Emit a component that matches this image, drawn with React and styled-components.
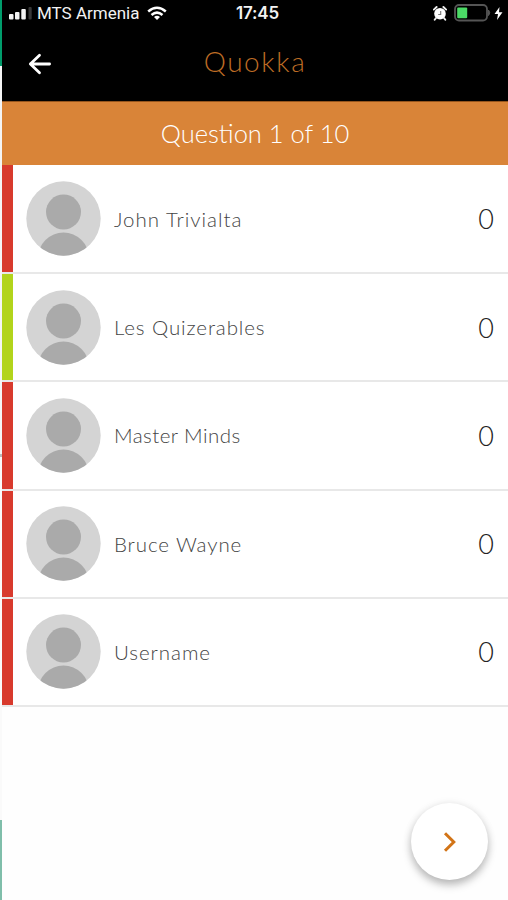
import React from "react";
import styled, { createGlobalStyle } from "styled-components";

const GlobalStyle = createGlobalStyle`
  * { box-sizing: border-box; }
  body { margin: 0; background: #fff; font-family: Lato, sans-serif; }
`;

const Page = styled.div`
  display: grid;
  grid-template-columns: 2px 1fr;
  height: 900px;
  overflow: hidden;
  background: #fefefe;
`;

const Edge = styled.div`
  display: grid;
  grid-template-rows: 66px 388px 3px 363px 80px;
`;

const EdgePart = styled.div`
  background: ${(p) => p.$color};
`;

const Screen = styled.main`
  display: flex;
  flex-direction: column;
  min-width: 0;
`;

const StatusBar = styled.div`
  display: grid;
  grid-template-columns: 1fr auto 1fr;
  align-items: center;
  height: 26px;
  padding: 0 5px 0 7px;
  background: #000;
  color: #f2f2f2;
  font-family: Roboto, sans-serif;
  font-size: 17px;
`;

const StatusGroup = styled.div`
  display: flex;
  align-items: center;
  justify-content: ${(p) => (p.$end ? "flex-end" : "flex-start")};
`;

const BatteryGroup = styled.div`
  display: flex;
  align-items: center;
  gap: 2px;
  margin-left: 7px;
`;

const Carrier = styled.span`
  margin: 0 8px 0 5px;
  white-space: nowrap;
`;

const Clock = styled.span`
  margin-left: 3px;
  font-family: Inter, sans-serif;
  font-size: 17px;
  font-weight: 600;
  letter-spacing: -0.15px;
`;

const Header = styled.header`
  display: grid;
  grid-template-columns: 50px 1fr 50px;
  align-items: center;
  height: 75px;
  background: #000;
`;

const BackButton = styled.button`
  display: flex;
  margin-left: 25px;
  padding: 0;
  border: 0;
  background: none;
`;

const Title = styled.h1`
  margin: -5px 0 0;
  color: #bd6c25;
  font-size: 28px;
  font-weight: 300;
  letter-spacing: 1.6px;
  line-height: 34px;
  text-align: center;
`;

const Banner = styled.div`
  display: flex;
  align-items: center;
  justify-content: center;
  height: 64px;
  padding-bottom: 1px;
  border-top: 1px solid #95551d;
  background: #d98438;
  color: #fff;
  font-size: 25.5px;
  font-weight: 300;
`;

const List = styled.ul`
  margin: 0;
  padding: 0;
  list-style: none;
`;

const Row = styled.li`
  display: flex;
  align-items: center;
  height: 108.25px;
  padding: 0 14px 0 13px;
  border-bottom: 2px solid #e8e8e8;
  background: linear-gradient(to right, ${(p) => p.$color} 11px, #fff 11px);

  &:first-child {
    height: 109px;
  }
`;

const Avatar = styled.svg`
  flex: none;
  width: 75px;
  height: 75px;
  margin-left: 11px;
`;

const Name = styled.span`
  flex: 1;
  margin-left: 13px;
  color: #444;
  font-size: 20.5px;
  font-weight: 300;
  letter-spacing: ${(p) => p.$spacing}px;
`;

const Score = styled.span`
  color: #222;
  font-size: 27px;
  font-weight: 300;
`;

const Footer = styled.footer`
  display: flex;
  flex: 1;
  align-items: flex-end;
  justify-content: flex-end;
  padding: 0 20px 20px 0;
`;

const NextButton = styled.button`
  display: flex;
  align-items: center;
  justify-content: center;
  width: 77px;
  height: 77px;
  padding: 0;
  border: 0;
  border-radius: 50%;
  background: #fff;
  box-shadow: 0 5px 8px rgba(0, 0, 0, 0.25), 0 1px 10px rgba(0, 0, 0, 0.08);
`;

const players = [
  { name: "John Trivialta", color: "#d83a2d", spacing: 1 },
  { name: "Les Quizerables", color: "#b2d41b", spacing: 0.9 },
  { name: "Master Minds", color: "#d83a2d", spacing: 0.45 },
  { name: "Bruce Wayne", color: "#d83a2d", spacing: 0.9 },
  { name: "Username", color: "#d83a2d", spacing: 0.95 },
];

function SignalIcon() {
  return (
    <svg width="23" height="13" viewBox="0 0 23 13" fill="#f4f4f4">
      <rect x="0" y="7" width="4.5" height="5.5" rx="1" />
      <rect x="6" y="5" width="4.5" height="7.5" rx="1" />
      <rect x="12.3" y="2" width="4.5" height="10.5" rx="1" />
      <rect x="19.5" y="0" width="3.2" height="12.5" rx="1" fill="#383838" />
    </svg>
  );
}

function WifiIcon() {
  return (
    <svg width="20" height="15" viewBox="0 0 20 15" fill="none" stroke="#fff" strokeWidth="2.5">
      <path d="M1.2 5.5Q10-2 18.8 5.5M4.5 9Q10 4.2 15.5 9" />
      <path d="M10 14 7 11Q10 8.5 13 11Z" fill="#fff" stroke="none" />
    </svg>
  );
}

function AlarmIcon() {
  return (
    <svg width="14" height="15" viewBox="0 0 14 15">
      <circle cx="7" cy="7.7" r="5.8" fill="#fff" />
      <path d="M.8 3.6 3.6 1M13.2 3.6 10.4 1M3 12 1.7 13.8M11 12l1.3 1.8" stroke="#eee" strokeWidth="1.9" strokeLinecap="round" />
      <path d="M7.7 5V8.5H5.2" fill="none" stroke="#777" strokeWidth="1.1" />
    </svg>
  );
}

function BatteryIcon() {
  return (
    <svg width="38" height="18" viewBox="0 0 38 18">
      <rect x="1" y="1" width="32" height="15.5" rx="4" fill="none" stroke="#555" strokeWidth="1.8" />
      <path d="M34.5 6q2.6 2.8 0 5.6Z" fill="#555" stroke="#555" />
      <rect x="3.2" y="3.4" width="10" height="10.8" rx="1" fill="#4bdb66" />
    </svg>
  );
}

function BoltIcon() {
  return (
    <svg width="9" height="13" viewBox="0 0 9 13">
      <path d="M5.5 0 .5 7H4L3 13 8.5 5.3H5Z" fill="#fff" />
    </svg>
  );
}

function Person({ id }) {
  return (
    <Avatar viewBox="0 0 75 75" aria-hidden="true">
      <clipPath id={id}>
        <circle cx="37.5" cy="37.5" r="37.2" />
      </clipPath>
      <g clipPath={`url(#${id})`}>
        <rect width="75" height="75" fill="#d4d4d4" />
        <circle cx="37.5" cy="31" r="17.5" fill="#aaa" />
        <circle cx="37.5" cy="77" r="25.5" fill="#aaa" />
      </g>
    </Avatar>
  );
}

export default function App() {
  return (
    <>
      <GlobalStyle />
      <Page>
        <Edge>
          <EdgePart $color="#009c6b" />
          <EdgePart $color="#f5f5f5" />
          <EdgePart $color="#b9b9b9" />
          <EdgePart $color="#fafafa" />
          <EdgePart $color="#7fbeaa" />
        </Edge>
        <Screen>
          <StatusBar>
            <StatusGroup>
              <SignalIcon />
              <Carrier>MTS Armenia</Carrier>
              <WifiIcon />
            </StatusGroup>
            <Clock>17:45</Clock>
            <StatusGroup $end>
              <AlarmIcon />
              <BatteryGroup>
                <BatteryIcon />
                <BoltIcon />
              </BatteryGroup>
            </StatusGroup>
          </StatusBar>
          <Header>
            <BackButton aria-label="Back">
              <svg width="26" height="24" viewBox="0 0 26 24" fill="none" stroke="#fff" strokeWidth="2.9" strokeLinecap="round" strokeLinejoin="round">
                <path d="M23.5 12H3.5M13 2.8 3.5 12l9.5 9.2" />
              </svg>
            </BackButton>
            <Title>Quokka</Title>
          </Header>
          <Banner>Question 1 of 10</Banner>
          <List>
            {players.map((p, i) => (
              <Row key={p.name} $color={p.color}>
                <Person id={`avatar-${i}`} />
                <Name $spacing={p.spacing}>{p.name}</Name>
                <Score>0</Score>
              </Row>
            ))}
          </List>
          <Footer>
            <NextButton aria-label="Next">
              <svg width="14" height="22" viewBox="0 0 14 22" fill="none" stroke="#d27417" strokeWidth="3">
                <path d="M2 2.2 10.8 11 2 19.8" />
              </svg>
            </NextButton>
          </Footer>
        </Screen>
      </Page>
    </>
  );
}
